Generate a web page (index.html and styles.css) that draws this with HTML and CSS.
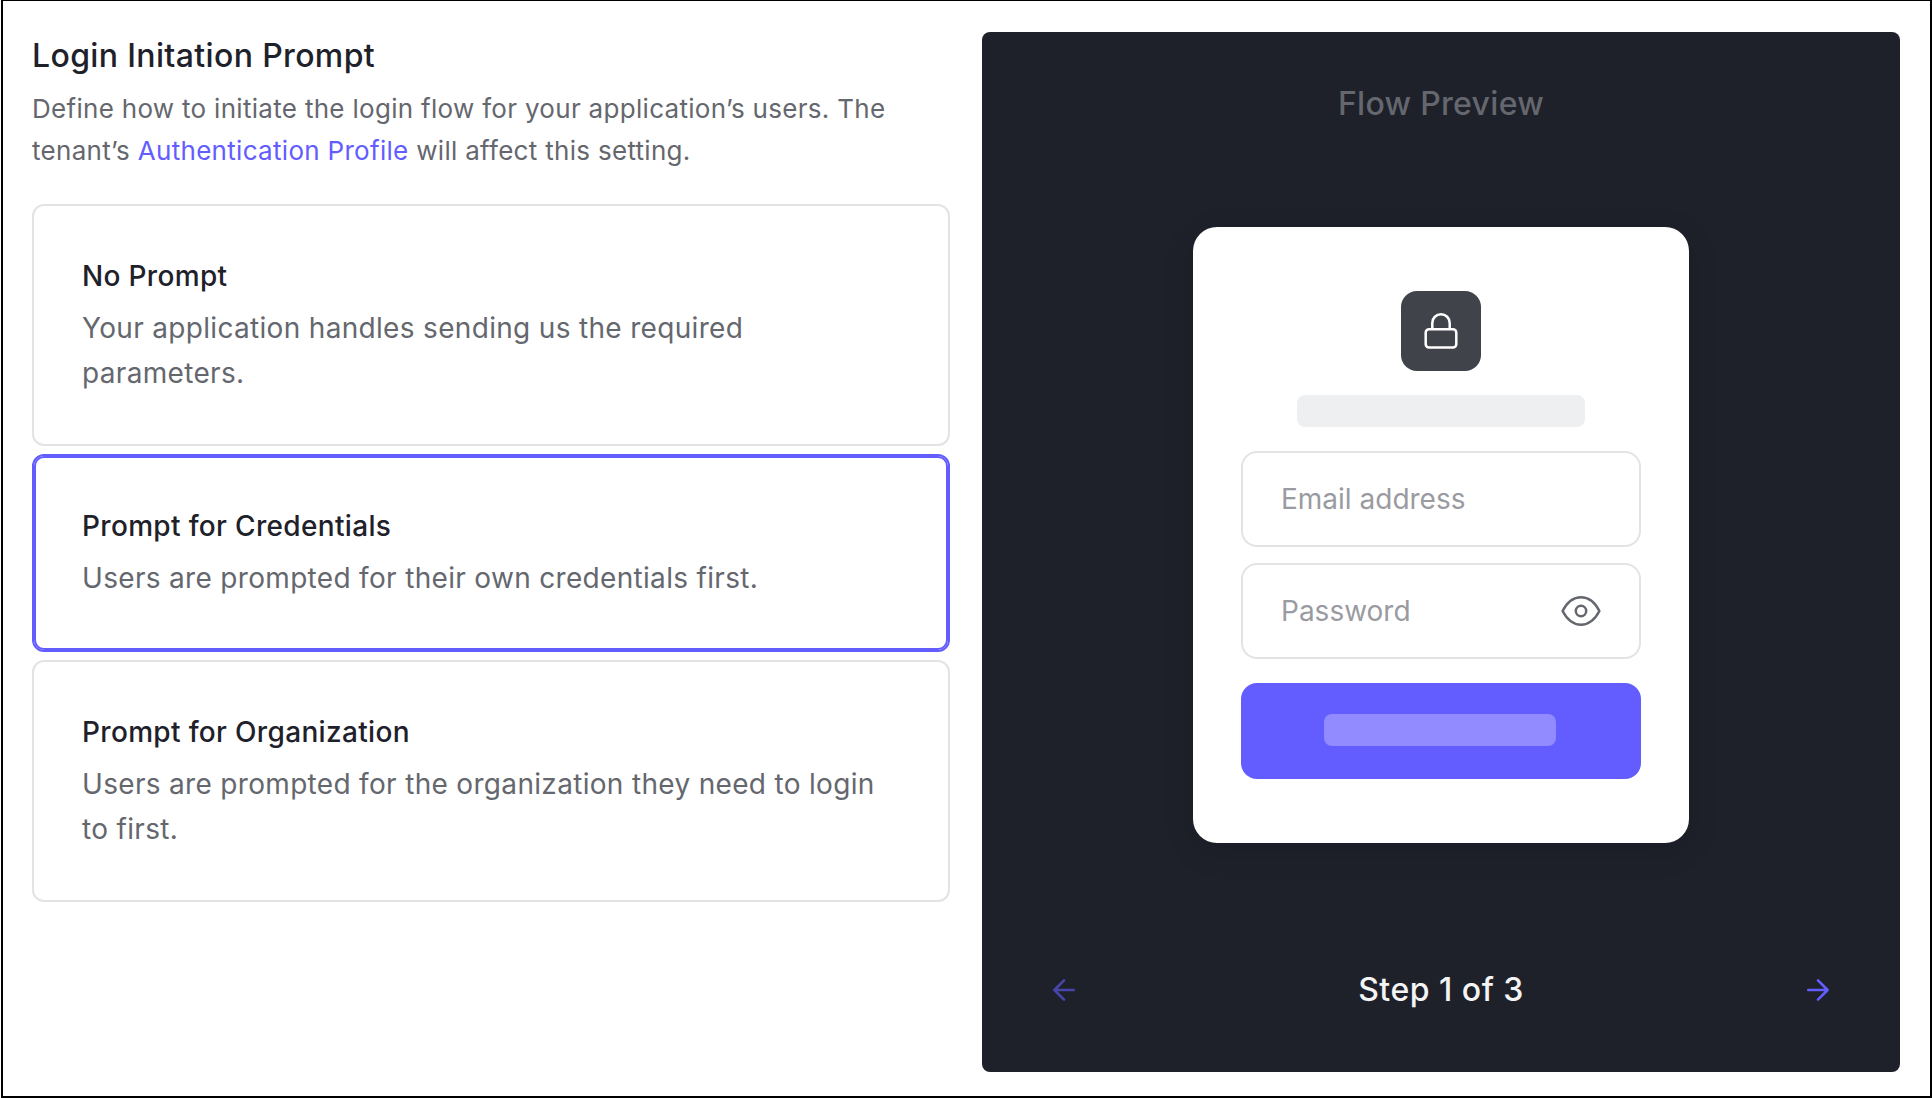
FILE: index.html
```html
<!DOCTYPE html>
<html lang="en">
<head>
  <meta charset="UTF-8" />
  <meta name="viewport" content="width=device-width, initial-scale=1.0" />
  <title>Login Initation Prompt</title>
  <link rel="stylesheet" href="styles.css">
</head>
<body>

  <main class="page">
    <section class="settings">
      <h1>Login Initation Prompt</h1>
      <p class="intro">Define how to initiate the login flow for your application’s users. The tenant’s <a href="#">Authentication Profile</a> will affect this setting.</p>

      <div class="options">
        <div class="option">
          <h2>No Prompt</h2>
          <p>Your application handles sending us the required parameters.</p>
        </div>
        <div class="option selected">
          <h2>Prompt for Credentials</h2>
          <p>Users are prompted for their own credentials first.</p>
        </div>
        <div class="option">
          <h2>Prompt for Organization</h2>
          <p>Users are prompted for the organization they need to login to first.</p>
        </div>
      </div>
    </section>

    <section class="preview">
      <div class="preview-title">Flow Preview</div>

      <div class="login-card">
        <div class="logo">
          <svg width="40" height="40" viewBox="0 0 40 40" fill="none" stroke="#fff" stroke-width="2.5">
            <rect x="4.7" y="18.2" width="30.6" height="18.4" rx="3.4" />
            <path d="M11.3 18V11.9a8.7 8.7 0 0 1 17.4 0V18" />
          </svg>
        </div>
        <div class="heading-bar"></div>
        <div class="field">Email address</div>
        <div class="field">
          Password
          <svg width="40" height="40" viewBox="0 0 40 40" fill="none" stroke="#65676e" stroke-width="2.5" stroke-linejoin="round">
            <path d="M1.6 20C5.5 12.5 12 6.3 20 6.3S34.500 12.500 38.400 20C34.500 27.500 28 33.700 20 33.700S5.500 27.500 1.600 20Z" />
            <circle cx="20" cy="20" r="5.200" />
          </svg>
        </div>
        <div class="submit"><span></span></div>
      </div>

      <div class="steps">
        <svg class="disabled" width="32" height="32" viewBox="0 0 32 32" fill="none" stroke="#635dff" stroke-width="2.6" stroke-linecap="round" stroke-linejoin="round">
          <path d="M25.700 16H6.500M16 6.400L6.400 16l9.600 9.600" />
        </svg>
        <span>Step 1 of 3</span>
        <svg width="32" height="32" viewBox="0 0 32 32" fill="none" stroke="#635dff" stroke-width="2.6" stroke-linecap="round" stroke-linejoin="round">
          <path d="M6.300 16h19.200M16 6.400l9.600 9.600-9.600 9.600" />
        </svg>
      </div>
    </section>
  </main>

</body>
</html>
```
FILE: styles.css
```css
* {
  box-sizing: border-box;
}

html, body {
  height: 100%;
  margin: 0;
}

body {
  padding-left: 1px;
  font-family: 'Inter', sans-serif;
  background-color: #ffffff;
  color: #1e212a;
}

h1, h2, p {
  margin: 0;
}

.page {
  display: grid;
  grid-template-columns: 918px 918px;
  gap: 32px;
  height: 100%;
  padding: 31px 0 0 29px;
  border: 2px solid #000;
  border-top-width: 1px;
}

h1 {
  font-size: 32px;
  font-weight: 500;
  line-height: 48px;
  letter-spacing: 0.36px;
}

.intro {
  margin-top: 8px;
  font-size: 26px;
  line-height: 42px;
  letter-spacing: 0.3px;
  color: #65676e;
}

.intro a {
  color: #635dff;
  text-decoration: none;
}

.options {
  display: flex;
  flex-direction: column;
  gap: 8px;
  margin-top: 32px;
}

.option {
  padding: 48px 48px 49px;
  border: 2px solid #e3e3e4;
  border-radius: 12px;
}

.option.selected {
  border-color: #635dff;
  box-shadow: inset 0 0 0 2px #635dff;
}

.option h2 {
  font-size: 28px;
  font-weight: 500;
  line-height: 1.6;
  letter-spacing: 0.33px;
}

.option p {
  margin-top: 7px;
  font-size: 28px;
  line-height: 1.6;
  letter-spacing: 0.32px;
  color: #65676e;
}

.preview {
  display: flex;
  flex-direction: column;
  align-items: center;
  height: 1040px;
  padding: 48px 66px 58px;
  border-radius: 8px;
  background-color: #1e212a;
}

.preview-title {
  font-size: 32px;
  font-weight: 500;
  line-height: 48px;
  letter-spacing: 0.3px;
  color: #65676e;
}

.login-card {
  display: flex;
  flex-direction: column;
  align-items: center;
  width: 496px;
  height: 616px;
  margin-top: 99px;
  padding: 64px 48px;
  border-radius: 24px;
  background-color: #ffffff;
  box-shadow: 0 8px 32px rgba(0, 0, 0, 0.12);
}

.logo {
  display: flex;
  align-items: center;
  justify-content: center;
  width: 80px;
  height: 80px;
  border-radius: 16px;
  background-color: #41434b;
}

.heading-bar {
  width: 288px;
  height: 32px;
  margin: 24px 0;
  border-radius: 8px;
  background-color: #eeeff1;
}

.field {
  display: flex;
  align-items: center;
  justify-content: space-between;
  width: 100%;
  height: 96px;
  padding: 0 38px;
  border: 2px solid #e3e3e4;
  border-radius: 16px;
  font-size: 28px;
  color: #9a9ba1;
}

.field + .field {
  margin-top: 16px;
}

.submit {
  width: 100%;
  height: 96px;
  margin-top: 24px;
  padding: 31px 83px;
  border-radius: 16px;
  background-color: #635dff;
}

.submit span {
  display: block;
  width: 232px;
  height: 32px;
  border-radius: 8px;
  background-color: #918bff;
}

.steps {
  display: flex;
  align-items: center;
  justify-content: space-between;
  width: 100%;
  margin-top: auto;
  font-size: 32px;
  font-weight: 500;
  line-height: 48px;
  letter-spacing: 0.5px;
  color: #f4f4f5;
}

.steps svg.disabled {
  opacity: 0.6;
}
```
